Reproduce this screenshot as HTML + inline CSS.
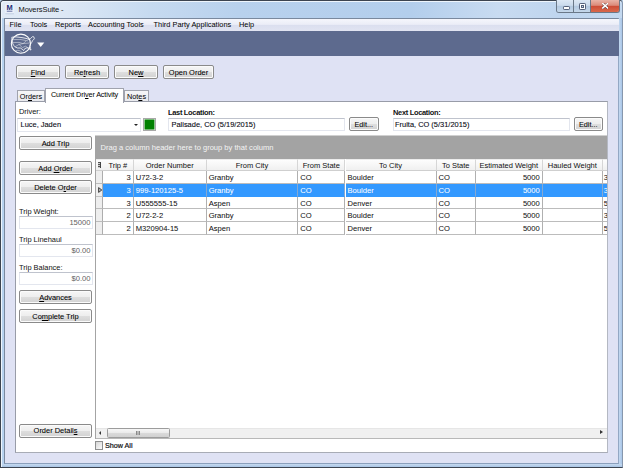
<!DOCTYPE html>
<html>
<head>
<meta charset="utf-8">
<title>MoversSuite</title>
<style>
html,body{margin:0;padding:0;}
body{width:623px;height:468px;overflow:hidden;position:relative;background:#b9d1ea;font-family:"Liberation Sans",sans-serif;font-size:7.4px;color:#111;}
*{box-sizing:border-box;}
div,span,svg{position:absolute;}
u{text-decoration:underline;position:static;}
#frame{left:0;top:0;width:623px;height:468px;background:linear-gradient(90deg,#e0eaf6 0%,#dde8f5 10%,#c6daf0 24%,#b8d1ed 38%,#b3ceec 66%,#c8dbf1 80%,#bfd5ee 90%,#c4d9f0 100%);border:1px solid #3c4450;border-right-color:#8797ad;border-radius:3.5px 3.5px 0 0;}
#frameinner{left:1px;top:1px;width:621px;height:466px;border:1px solid #eef5fc;border-right-color:transparent;border-radius:3px 3px 0 0;}
#sideL{left:1.6px;top:18px;width:2.6px;height:446px;background:#b7d2ef;}
#sideR{left:619.4px;top:18px;width:2.8px;height:446px;background:linear-gradient(90deg,#c4d9f0,#a9c6e8);}
#sideB{left:2px;top:464.2px;width:620px;height:2.8px;background:linear-gradient(#c6daf0,#a8c4e4);}
#title{left:18.5px;top:5px;font-size:7.5px;color:#111;letter-spacing:-0.1px;white-space:nowrap;}
#clientbg{left:4.2px;top:17.8px;width:615.2px;height:446.4px;background:#dfe2f4;border:0.8px solid #7a899e;border-right-color:#93a8c4;border-bottom-color:#8a9fbc;}
#menubar{left:5px;top:18.6px;width:614px;height:12.4px;background:linear-gradient(#f5f6fc 0%,#ebedf7 45%,#dbdfef 52%,#e1e4f2 100%);}
#menubar span{top:1.2px;font-size:7.4px;color:#000;white-space:nowrap;}
#toolbar{left:5px;top:31px;width:614px;height:24.6px;background:#5d6a8e;}
.btn{padding-top:0.5px;height:14px;border:1px solid #8a8a8a;border-radius:2px;background:linear-gradient(#f6f6f6 0%,#eeeeee 48%,#dedede 52%,#d2d2d2 100%);box-shadow:inset 0 0 0 1px #fbfbfb;text-align:center;font-size:7.45px;line-height:12px;color:#000;white-space:nowrap;-webkit-text-stroke:0.07px #000;}
.tab{border:1px solid #a0a3ae;border-bottom:none;background:linear-gradient(#f6f6f8,#e6e7ec);font-size:7.3px;text-align:center;line-height:11px;white-space:nowrap;color:#000;}
#panel{background:#fff;border:1px solid #989ca8;border-right-color:#b4b8c2;border-bottom-color:#a8acb6;}
.lbl{font-size:7.45px;white-space:nowrap;color:#111;}
.b{font-weight:bold;letter-spacing:-0.3px;}
.inp{border:1px solid #e3e6ee;border-top-color:#bfc3cd;background:#fff;font-size:7.45px;line-height:11.5px;padding:0 2.5px;white-space:nowrap;color:#0a0a14;-webkit-text-stroke:0.1px #0a0a14;}
.ro{color:#606060;text-align:right;padding-right:1px;-webkit-text-stroke:0;font-size:7.6px;}
#grid{background:#fff;}
#group{background:#a3a3a3;color:#f4f4f4;font-size:7.55px;white-space:nowrap;}
.hd{background:linear-gradient(#fdfdfd,#f0f0f0);border-right:1px solid #d6d6d6;border-bottom:1px solid #cfcfcf;border-top:1px solid #ececec;font-size:7.5px;text-align:center;white-space:nowrap;color:#111;overflow:hidden;}
.c{border-right:1px solid #b0b0b0;border-bottom:1px solid #bcbcbc;font-size:7.6px;padding:0 1px 0 2px;-webkit-text-stroke:0.04px;white-space:nowrap;overflow:hidden;background:#fff;color:#111;}
.c.r{text-align:right;padding-right:2px;}
.c.ind{background:#eeeeee;border-right:1px solid #adadad;}
.sel{background:#3399ff;color:#fff;border-bottom-color:#3399ff;border-right-color:#86a8d0;}
.sel.ind{background:#eeeeee;color:#000;border-right:1px solid #adadad;border-bottom-color:#c2c2c2;}
</style>
</head>
<body>
<div id="frame"></div><div id="frameinner"></div>
<div id="sideL"></div><div id="sideR"></div><div id="sideB"></div>
<svg style="left:5.4px;top:4.4px" width="9.4" height="10.4" viewBox="0 0 9.4 10.4"><rect x="0" y="0" width="9.4" height="9.6" rx="0.8" fill="#eaf0f9"/><rect x="0.4" y="9.5" width="8.6" height="0.7" fill="#b4c4dc"/><text x="1.5" y="6" font-family="Liberation Sans, sans-serif" font-weight="bold" font-size="7.2" fill="#1c2c78" textLength="6.2" lengthAdjust="spacingAndGlyphs">M</text><rect x="1.8" y="6.6" width="5.6" height="1.4" fill="#8b95bd"/></svg>
<div id="title">MoversSuite -</div>
<div style="left:556px;top:0;width:63.6px;height:13px;border:1px solid #6a7888;border-top:none;border-radius:0 0 3px 3px;overflow:hidden;background:#c3d6ea;">
  <div style="left:0;top:0;width:17px;height:12px;background:linear-gradient(#dde8f4 0%,#cbdaec 45%,#b3c8e0 50%,#c5d7ea 100%);border-right:1px solid #6a7888;"></div>
  <div style="left:17px;top:0;width:16.5px;height:12px;background:linear-gradient(#dde8f4 0%,#cbdaec 45%,#b3c8e0 50%,#c5d7ea 100%);border-right:1px solid #6a7888;"></div>
  <div style="left:33.5px;top:0;width:29px;height:12px;background:linear-gradient(#e9b3a7 0%,#db8a79 45%,#cc4b35 50%,#d9694c 100%);"></div>
  <div style="left:5.5px;top:6px;width:7.5px;height:3.5px;border:1px solid #56617a;background:#fff;border-radius:1.2px;"></div>
  <div style="left:21.5px;top:2.5px;width:7.5px;height:7px;border:1px solid #56617a;background:#fff;border-radius:1.2px;"></div>
  <div style="left:23.5px;top:4.5px;width:3.5px;height:3px;border:1px solid #56617a;background:#c8d8ea;"></div>
  <svg style="left:45px;top:3px" width="6.4" height="5.6" viewBox="0 0 8 7"><path d="M1 0.8 L7 6.2 M7 0.8 L1 6.2" stroke="#5d3a3a" stroke-width="3.2" stroke-linecap="square"/><path d="M1 0.8 L7 6.2 M7 0.8 L1 6.2" stroke="#fff" stroke-width="2" stroke-linecap="square"/></svg>
</div>
<div id="clientbg"></div>
<div id="menubar">
<span style="left:4.6px">File</span>
<span style="left:25px">Tools</span>
<span style="left:50px">Reports</span>
<span style="left:83px">Accounting Tools</span>
<span style="left:148.6px">Third Party Applications</span>
<span style="left:234px">Help</span>
</div>
<div id="toolbar">
<svg style="left:0;top:0" width="60" height="25" viewBox="0 0 60 25">
 <g fill="none" stroke="#fff" stroke-linecap="round" stroke-linejoin="round" transform="translate(-5,-31)">
  <circle cx="20.9" cy="43.7" r="9.6" stroke-width="1.05"/>
  <path stroke-width="0.8" d="M12.2 37.2 L16 36.9 L22 37.6 L27 38.6 L28.6 39.5 L30.4 38.6 L32.6 36.6 L33.8 36.8 L34.4 38.8 L32.6 40.6 L31.6 42.6 L30.2 44.6 L29.8 46.4 L30.6 48.6 L31 50 L29.8 49.6 L28.6 47.8 L26.4 48 L24.6 48.8 L23.6 50.6 L22.2 49.2 L20.4 48 L17.6 48 L15.6 47.2 L13.4 45.2 L12.4 42.6 L12 39.6 Z"/>
  <g stroke-width="0.55" opacity="0.85">
  <path d="M13 39.6 L20 39.4 L27.6 40.8"/>
  <path d="M12.8 42.6 L19 42.4 L23 43.6 L29.4 43"/>
  <path d="M15.4 46.6 L19 44.4 L23 43.6 L26 41.2"/>
  <path d="M19 44.4 L22.4 47.6 L25.6 46.2 L27.6 47.6"/>
  <path d="M16 50.8 C18.4 49.6 20 50.4 22 52.4"/>
  </g>
 </g>
 <path d="M32.1 11.4 L39.3 11.4 L35.7 15.9 Z" fill="#fff"/>
</svg></div>
<div class="btn" style="left:16px;top:65px;width:44px;height:14px;"><u>F</u>ind</div>
<div class="btn" style="left:65px;top:65px;width:44px;height:14px;">Re<u>f</u>resh</div>
<div class="btn" style="left:114px;top:65px;width:44px;height:14px;">Ne<u>w</u></div>
<div class="btn" style="left:163px;top:65px;width:51px;height:14px;">Open Order</div>
<div class="tab" style="left:17px;top:89.5px;width:28px;height:13px;">Or<u>d</u>ers</div>
<div class="tab" style="left:124px;top:89.5px;width:25px;height:13px;">Not<u>e</u>s</div>
<div id="panel" style="left:15px;top:101px;width:593px;height:352px;"></div>
<div class="tab" style="left:45px;top:88px;width:79px;height:15px;background:#fff;line-height:11.4px;letter-spacing:-0.15px;">Current Dri<u>v</u>er Activity</div>
<div class="lbl" style="left:19px;top:107px;">Driver:</div>
<div class="inp" style="left:17px;top:118px;width:124px;height:13.5px;">Luce, Jaden</div>
<div style="left:133.5px;top:123.5px;width:0;height:0;border-left:2.2px solid transparent;border-right:2.2px solid transparent;border-top:2.6px solid #222;"></div>
<div style="left:143px;top:118px;width:13px;height:13px;background:#008000;border:1px solid #a8a8a8;box-shadow:inset 0 0 0 0.6px #e0efe0;"></div>
<div class="lbl b" style="left:168px;top:107.5px;">Last Location:</div>
<div class="inp" style="left:168px;top:118px;width:176.5px;height:13px;line-height:11.4px;">Palisade, CO (5/19/2015)</div>
<div class="btn" style="left:349px;top:117.4px;width:29.5px;height:14px;line-height:11.6px;-webkit-text-stroke:0.05px;font-size:7.3px;">Edit...</div>
<div class="lbl b" style="left:393px;top:107.5px;">Next Location:</div>
<div class="inp" style="left:392.5px;top:118px;width:177px;height:13px;line-height:11.4px;padding-left:1.5px;">Fruita, CO (5/31/2015)</div>
<div class="btn" style="left:573.5px;top:117.4px;width:29.5px;height:14px;line-height:11.6px;-webkit-text-stroke:0.05px;font-size:7.3px;">Edit...</div>
<div class="btn" style="left:19px;top:136px;width:73px;height:14px;">Add Trip</div>
<div class="btn" style="left:19px;top:161px;width:73px;height:14px;">Add <u>O</u>rder</div>
<div class="btn" style="left:19px;top:180px;width:73px;height:14px;">Delete O<u>r</u>der</div>
<div class="lbl" style="left:19px;top:207px;">Trip Weight:</div>
<div class="inp ro" style="left:19px;top:216px;width:73.5px;height:13px;">15000</div>
<div class="lbl" style="left:19px;top:235px;">Trip Linehaul</div>
<div class="inp ro" style="left:19px;top:244px;width:73.5px;height:13px;">$0.00</div>
<div class="lbl" style="left:19px;top:263px;">Trip Balance:</div>
<div class="inp ro" style="left:19px;top:272px;width:73.5px;height:13px;">$0.00</div>
<div class="btn" style="left:19px;top:290px;width:73px;height:14px;"><u>A</u>dvances</div>
<div class="btn" style="left:19px;top:309px;width:73px;height:14px;">Co<u>m</u>plete Trip</div>
<div class="btn" style="left:19px;top:423.6px;width:73px;height:14px;">Order Detail<u>s</u></div>
<div id="grid" style="left:94.5px;top:135px;width:512.5px;height:306px;"></div>
<div style="left:95px;top:135px;width:512px;height:1px;background:#d0d0d0;"></div>
<div id="group" style="left:95px;top:136px;width:512px;height:22.8px;"><span style="left:5.6px;top:7.2px;line-height:9px">Drag a column header here to group by that column</span></div>
<div class="hd" style="left:95px;top:158.6px;width:8px;height:12.3px;line-height:11.1px;border-right:none;"></div>
<div class="hd" style="left:103px;top:158.6px;width:30.7px;height:12.3px;line-height:11.1px;">Trip #</div>
<div class="hd" style="left:133.7px;top:158.6px;width:73px;height:12.3px;line-height:11.1px;">Order Number</div>
<div class="hd" style="left:206.7px;top:158.6px;width:91.5px;height:12.3px;line-height:11.1px;">From City</div>
<div class="hd" style="left:298.2px;top:158.6px;width:47.3px;height:12.3px;line-height:11.1px;">From State</div>
<div class="hd" style="left:345.5px;top:158.6px;width:91px;height:12.3px;line-height:11.1px;">To City</div>
<div class="hd" style="left:436.5px;top:158.6px;width:39.3px;height:12.3px;line-height:11.1px;">To State</div>
<div class="hd" style="left:475.8px;top:158.6px;width:67px;height:12.3px;line-height:11.1px;">Estimated Weight</div>
<div class="hd" style="left:542.8px;top:158.6px;width:60px;height:12.3px;line-height:11.1px;">Hauled Weight</div>
<div class="hd" style="left:602.8px;top:158.6px;width:4.2px;height:12.3px;line-height:11.1px;border-right:none;"></div>
<div class="c ind" style="left:95px;top:170.9px;width:8px;height:12.85px;line-height:13.85px;"></div>
<div class="c r" style="left:103px;top:170.9px;width:30.7px;height:12.85px;line-height:13.85px;">3</div>
<div class="c" style="left:133.7px;top:170.9px;width:73px;height:12.85px;line-height:13.85px;">U72-3-2</div>
<div class="c" style="left:206.7px;top:170.9px;width:91.5px;height:12.85px;line-height:13.85px;">Granby</div>
<div class="c" style="left:298.2px;top:170.9px;width:47.3px;height:12.85px;line-height:13.85px;">CO</div>
<div class="c" style="left:345.5px;top:170.9px;width:91px;height:12.85px;line-height:13.85px;">Boulder</div>
<div class="c" style="left:436.5px;top:170.9px;width:39.3px;height:12.85px;line-height:13.85px;">CO</div>
<div class="c r" style="left:475.8px;top:170.9px;width:67px;height:12.85px;line-height:13.85px;">5000</div>
<div class="c r" style="left:542.8px;top:170.9px;width:60px;height:12.85px;line-height:13.85px;"></div>
<div class="c" style="left:602.8px;top:170.9px;width:4.2px;height:12.85px;line-height:13.85px;border-right:none;padding-left:1px;">3</div>
<div class="c ind sel" style="left:95px;top:183.75px;width:8px;height:12.85px;line-height:13.85px;"></div>
<div class="c r sel" style="left:103px;top:183.75px;width:30.7px;height:12.85px;line-height:13.85px;">3</div>
<div class="c  sel" style="left:133.7px;top:183.75px;width:73px;height:12.85px;line-height:13.85px;">999-120125-5</div>
<div class="c  sel" style="left:206.7px;top:183.75px;width:91.5px;height:12.85px;line-height:13.85px;">Granby</div>
<div class="c  sel" style="left:298.2px;top:183.75px;width:47.3px;height:12.85px;line-height:13.85px;">CO</div>
<div class="c  sel" style="left:345.5px;top:183.75px;width:91px;height:12.85px;line-height:13.85px;">Boulder</div>
<div class="c  sel" style="left:436.5px;top:183.75px;width:39.3px;height:12.85px;line-height:13.85px;">CO</div>
<div class="c r sel" style="left:475.8px;top:183.75px;width:67px;height:12.85px;line-height:13.85px;">5000</div>
<div class="c r sel" style="left:542.8px;top:183.75px;width:60px;height:12.85px;line-height:13.85px;"></div>
<div class="c  sel" style="left:602.8px;top:183.75px;width:4.2px;height:12.85px;line-height:13.85px;border-right:none;padding-left:1px;">3</div>
<div class="c ind" style="left:95px;top:196.6px;width:8px;height:12.85px;line-height:13.85px;"></div>
<div class="c r" style="left:103px;top:196.6px;width:30.7px;height:12.85px;line-height:13.85px;">3</div>
<div class="c" style="left:133.7px;top:196.6px;width:73px;height:12.85px;line-height:13.85px;">U555555-15</div>
<div class="c" style="left:206.7px;top:196.6px;width:91.5px;height:12.85px;line-height:13.85px;">Aspen</div>
<div class="c" style="left:298.2px;top:196.6px;width:47.3px;height:12.85px;line-height:13.85px;">CO</div>
<div class="c" style="left:345.5px;top:196.6px;width:91px;height:12.85px;line-height:13.85px;">Denver</div>
<div class="c" style="left:436.5px;top:196.6px;width:39.3px;height:12.85px;line-height:13.85px;">CO</div>
<div class="c r" style="left:475.8px;top:196.6px;width:67px;height:12.85px;line-height:13.85px;">5000</div>
<div class="c r" style="left:542.8px;top:196.6px;width:60px;height:12.85px;line-height:13.85px;"></div>
<div class="c" style="left:602.8px;top:196.6px;width:4.2px;height:12.85px;line-height:13.85px;border-right:none;padding-left:1px;">5</div>
<div class="c ind" style="left:95px;top:209.45px;width:8px;height:12.85px;line-height:13.85px;"></div>
<div class="c r" style="left:103px;top:209.45px;width:30.7px;height:12.85px;line-height:13.85px;">2</div>
<div class="c" style="left:133.7px;top:209.45px;width:73px;height:12.85px;line-height:13.85px;">U72-2-2</div>
<div class="c" style="left:206.7px;top:209.45px;width:91.5px;height:12.85px;line-height:13.85px;">Granby</div>
<div class="c" style="left:298.2px;top:209.45px;width:47.3px;height:12.85px;line-height:13.85px;">CO</div>
<div class="c" style="left:345.5px;top:209.45px;width:91px;height:12.85px;line-height:13.85px;">Boulder</div>
<div class="c" style="left:436.5px;top:209.45px;width:39.3px;height:12.85px;line-height:13.85px;">CO</div>
<div class="c r" style="left:475.8px;top:209.45px;width:67px;height:12.85px;line-height:13.85px;">5000</div>
<div class="c r" style="left:542.8px;top:209.45px;width:60px;height:12.85px;line-height:13.85px;"></div>
<div class="c" style="left:602.8px;top:209.45px;width:4.2px;height:12.85px;line-height:13.85px;border-right:none;padding-left:1px;">3</div>
<div class="c ind" style="left:95px;top:222.3px;width:8px;height:12.85px;line-height:13.85px;"></div>
<div class="c r" style="left:103px;top:222.3px;width:30.7px;height:12.85px;line-height:13.85px;">2</div>
<div class="c" style="left:133.7px;top:222.3px;width:73px;height:12.85px;line-height:13.85px;">M320904-15</div>
<div class="c" style="left:206.7px;top:222.3px;width:91.5px;height:12.85px;line-height:13.85px;">Aspen</div>
<div class="c" style="left:298.2px;top:222.3px;width:47.3px;height:12.85px;line-height:13.85px;">CO</div>
<div class="c" style="left:345.5px;top:222.3px;width:91px;height:12.85px;line-height:13.85px;">Denver</div>
<div class="c" style="left:436.5px;top:222.3px;width:39.3px;height:12.85px;line-height:13.85px;">CO</div>
<div class="c r" style="left:475.8px;top:222.3px;width:67px;height:12.85px;line-height:13.85px;">5000</div>
<div class="c r" style="left:542.8px;top:222.3px;width:60px;height:12.85px;line-height:13.85px;"></div>
<div class="c" style="left:602.8px;top:222.3px;width:4.2px;height:12.85px;line-height:13.85px;border-right:none;padding-left:1px;">5</div>
<svg style="left:97.6px;top:187.15px" width="4.4" height="6" viewBox="0 0 4.4 6"><path d="M0.6 0.6 L3.8 3 L0.6 5.4 Z" fill="#bbb" stroke="#333" stroke-width="0.9" stroke-linejoin="round"/></svg>
<div style="left:97.8px;top:162.4px;width:3.6px;height:5.4px;background:repeating-linear-gradient(#555 0,#555 1px,#ccc 1px,#ccc 2px);border-right:1.4px solid #444;"></div>
<div style="left:95px;top:427.5px;width:512px;height:11.5px;background:#f0f0f0;border-top:1px solid #e6e6e6;border-bottom:1px solid #b8b8b8;"></div>
<div style="left:95px;top:158px;width:1px;height:281px;background:#a4a4a4;"></div>
<div style="left:107px;top:428px;width:62.5px;height:9.6px;border:1px solid #9c9c9c;border-radius:1.5px;background:linear-gradient(#f7f7f7 0%,#eaeaea 48%,#dadada 52%,#d0d0d0 100%);"></div>
<div style="left:136px;top:431px;width:1px;height:3.5px;background:#8a8a8a;box-shadow:1.5px 0 0 #8a8a8a,3px 0 0 #8a8a8a;"></div>
<div style="left:99.4px;top:430.6px;width:0;height:0;border-top:2.2px solid transparent;border-bottom:2.2px solid transparent;border-right:2.6px solid #333;"></div>
<div style="left:599.8px;top:430.4px;width:0;height:0;border-top:2.5px solid transparent;border-bottom:2.5px solid transparent;border-left:3px solid #333;"></div>
<div style="left:95px;top:441px;width:8px;height:9px;border:1px solid #8e8f8f;background:linear-gradient(135deg,#d6d6d6,#fbfbfb);"></div>
<div class="lbl" style="left:105px;top:440.6px;font-size:7.2px;-webkit-text-stroke:0.2px;">Show All</div>
</body>
</html>
